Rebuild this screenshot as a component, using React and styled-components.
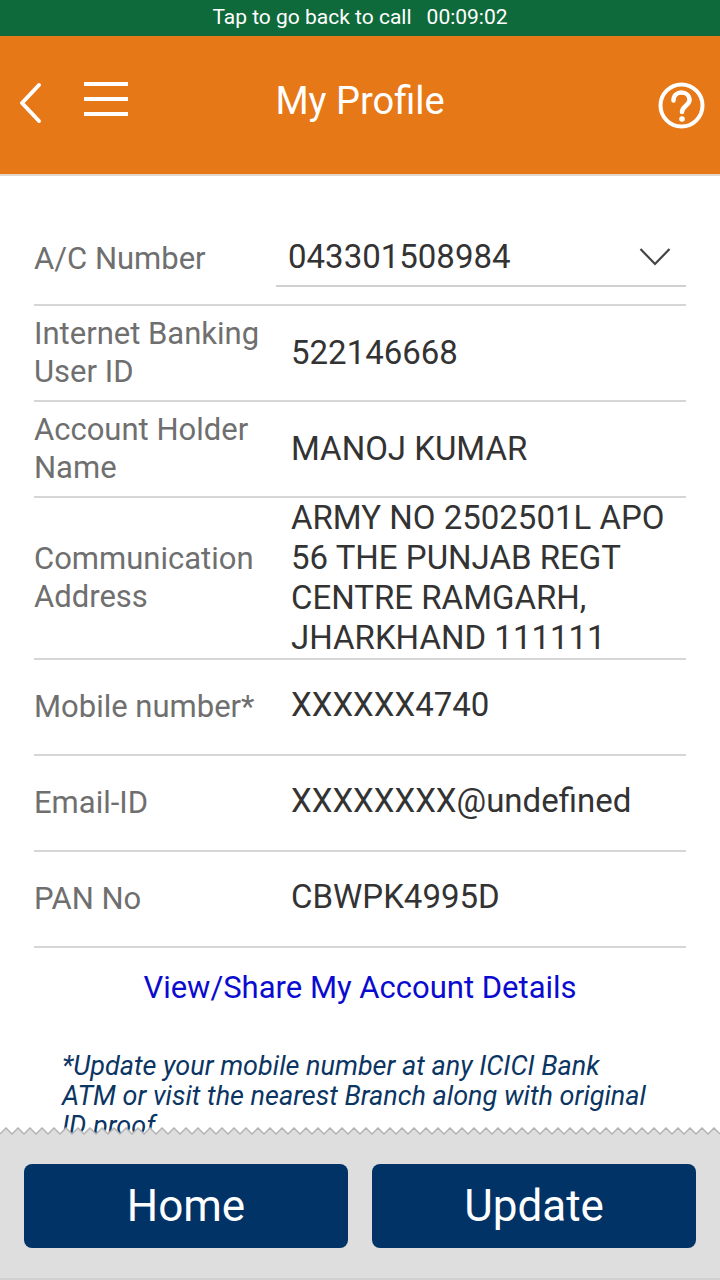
import React from 'react';
import styled, { createGlobalStyle } from 'styled-components';

const Global = createGlobalStyle`
  html, body { margin: 0; padding: 0; background: #fff; }
  * { box-sizing: border-box; }
  body { font-family: Roboto, "Liberation Sans", sans-serif; }
`;

const Page = styled.div`
  width: 720px;
  height: 1280px;
  display: flex;
  flex-direction: column;
  overflow: hidden;
`;

const CallBar = styled.div`
  height: 36px;
  flex: none;
  background: #0f6a3b;
  color: #fff;
  display: flex;
  justify-content: center;
  align-items: center;
  gap: 15px;
  font-size: 21px;
  padding-bottom: 2px;
`;

const Header = styled.header`
  height: 140px;
  flex: none;
  background: #e77817;
  border-bottom: 2px solid #e0d8cf;
  display: flex;
  align-items: center;
  position: relative;
  padding: 0 0 4px 18px;
`;

const Title = styled.h1`
  flex: 1;
  margin: 0;
  font-size: 38px;
  font-weight: 400;
  color: #fff;
  text-align: center;
  padding-right: 18px;
  padding-bottom: 4px;
`;

const IconSlot = styled.div`
  width: ${props => props.$w}px;
  flex: none;
  display: flex;
  margin-right: ${props => props.$mr || 0}px;
`;

const HeaderIcons = styled.div`
  position: absolute;
  left: 18px;
  top: 46px;
  display: flex;
`;

const HelpIcon = styled.div`
  position: absolute;
  right: 15px;
  top: 46px;
  display: flex;
`;

const Main = styled.main`
  flex: 1;
  min-height: 0;
  overflow: hidden;
  padding: 34px 34px 0;
`;

const Row = styled.div`
  display: flex;
  align-items: center;
  height: ${props => props.$h}px;
  border-bottom: 2px solid #d6d6d6;
`;

const FirstRow = styled.div`
  display: flex;
  height: 96px;
  border-bottom: 2px solid #d6d6d6;
`;

const Label = styled.div`
  width: 257px;
  flex: none;
  color: #6f6f6f;
  font-size: 31px;
  line-height: 38px;
  padding-top: ${props => props.$pt || 0}px;
`;

const Value = styled.div`
  flex: 1;
  color: #333;
  font-size: 33px;
  line-height: 40px;
  padding-bottom: ${props => props.$pb || 0}px;
`;

const AccountSelect = styled.div`
  width: 410px;
  margin-left: -15px;
  height: 77px;
  border-bottom: 2px solid #d0d0d0;
  display: flex;
  justify-content: space-between;
  align-items: center;
  padding: 18px 15px 0 12px;
  color: #333;
  font-size: 33px;
`;

const ShareLink = styled.a`
  display: block;
  text-align: center;
  color: #0b0bd0;
  font-size: 31px;
  line-height: 38px;
  margin-top: 21px;
`;

const Note = styled.p`
  margin: 44px 0 0;
  padding: 0 28px;
  color: #0b3563;
  font-style: italic;
  font-size: 27px;
  line-height: 30px;
`;

const Footer = styled.footer`
  height: 147px;
  flex: none;
  background: #dedede;
  border-bottom: 2px solid #d0d0d0;
  position: relative;
  display: flex;
  gap: 24px;
  padding: 31px 24px 0;
`;

const Zigzag = styled.svg`
  position: absolute;
  left: 0;
  top: -6px;
  display: block;
`;

const FooterButton = styled.button`
  flex: 1;
  height: 84px;
  border: 0;
  border-radius: 8px;
  background: #023366;
  color: #fff;
  font-family: inherit;
  font-size: 44px;
  padding: 0;
`;

const BackIcon = () => (
  <svg width="24" height="42" viewBox="0 0 24 42" fill="none">
    <path d="M21 3 4 21l17 18" stroke="#fff" strokeWidth="4" strokeLinecap="round" strokeLinejoin="round" />
  </svg>
);

const MenuIcon = () => (
  <svg width="44" height="34" viewBox="0 0 44 34" fill="#fff">
    <rect x="0" y="0" width="44" height="4" />
    <rect x="0" y="15" width="44" height="4" />
    <rect x="0" y="30" width="44" height="4" />
  </svg>
);

const HelpGlyph = () => (
  <svg width="47" height="47" viewBox="0 0 47 47" fill="none">
    <circle cx="23.5" cy="23.5" r="21" stroke="#fff" strokeWidth="4" />
    <path d="M15.5 18.5c0-5 3.600-8 8-8s8 3 8 7.500c0 5.500-7.500 6-7.500 12" stroke="#fff" strokeWidth="4.500" strokeLinecap="round" />
    <circle cx="24" cy="37" r="2.800" fill="#fff" />
  </svg>
);

const Chevron = () => (
  <svg width="32" height="20" viewBox="0 0 32 20" fill="none">
    <path d="M1.500 2 16 17 30.500 2" stroke="#444" strokeWidth="2.200" />
  </svg>
);

const rows = [
  { h: 96, label: ['Internet Banking', 'User ID'], value: ['522146668'], pb: 0 },
  { h: 96, label: ['Account Holder', 'Name'], value: ['MANOJ KUMAR'], pb: 0 },
  { h: 162, label: ['Communication', 'Address'], value: ['ARMY NO 2502501L APO', '56 THE PUNJAB REGT', 'CENTRE RAMGARH,', 'JHARKHAND 111111'], pb: 0 },
  { h: 96, label: ['Mobile number*'], value: ['XXXXXX4740'], pb: 4 },
  { h: 96, label: ['Email-ID'], value: ['XXXXXXXX@undefined'], pb: 4 },
  { h: 96, label: ['PAN No'], value: ['CBWPK4995D'], pb: 4 },
];

const zigzagPoints = () => {
  const pts = [];
  for (let x = 0; x <= 720; x += 6) pts.push(`${x},${(x / 6) % 2 === 0 ? 7 : 1}`);
  return pts.join(' ');
};

const Lines = ({ items }) => items.map(t => <div key={t}>{t}</div>);

export default function App() {
  return (
    <Page>
      <Global />
      <CallBar>
        <span>Tap to go back to call</span>
        <span>00:09:02</span>
      </CallBar>
      <Header>
        <HeaderIcons>
          <IconSlot $w={24} $mr={42}><BackIcon /></IconSlot>
          <IconSlot $w={44}><MenuIcon /></IconSlot>
        </HeaderIcons>
        <Title>My Profile</Title>
        <HelpIcon><HelpGlyph /></HelpIcon>
      </Header>
      <Main>
        <FirstRow>
          <Label $pt={30}>A/C Number</Label>
          <AccountSelect>
            <span>043301508984</span>
            <Chevron />
          </AccountSelect>
        </FirstRow>
        {rows.map(r => (
          <Row key={r.label[0]} $h={r.h}>
            <Label><Lines items={r.label} /></Label>
            <Value $pb={r.pb}><Lines items={r.value} /></Value>
          </Row>
        ))}
        <ShareLink>View/Share My Account Details</ShareLink>
        <Note>*Update your mobile number at any ICICI Bank ATM or visit the nearest Branch along with original ID proof</Note>
      </Main>
      <Footer>
        <Zigzag width="720" height="8" viewBox="0 0 720 8">
          <polygon points={`0,8 ${zigzagPoints()} 720,8`} fill="#dedede" />
          <polyline points={zigzagPoints()} fill="none" stroke="#b4b4b4" strokeWidth="1.500" />
        </Zigzag>
        <FooterButton>Home</FooterButton>
        <FooterButton>Update</FooterButton>
      </Footer>
    </Page>
  );
}
